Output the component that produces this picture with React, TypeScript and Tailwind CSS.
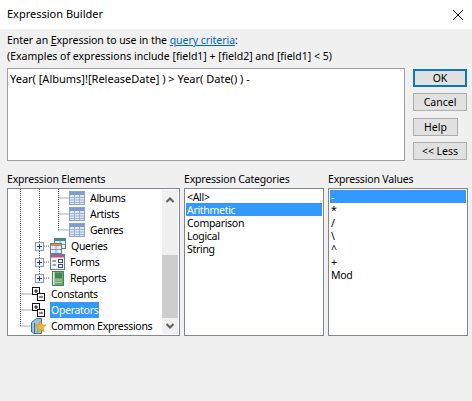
import React from "react";

function TableIcon() {
  return (
    <svg width="16" height="14" viewBox="0 0 16 14" className="shrink-0">
      <rect x="0.5" y="0.5" width="15" height="13" fill="#dfe7f5" stroke="#8fa3c4" />
      <rect x="1" y="1" width="14" height="3" fill="#7f9ccb" />
      <path d="M1 6.5H15M1 9H15M1 11.5H15M5.5 4V13M10.5 4V13" stroke="#9db3d6" fill="none" />
    </svg>
  );
}

function PlusBox() {
  return (
    <svg width="9" height="9" viewBox="0 0 9 9" className="shrink-0">
      <rect x="0.5" y="0.5" width="8" height="8" fill="#f1f1f1" stroke="#8f9aa8" />
      <path d="M2 4.5H7M4.5 2V7" stroke="#2c3e63" fill="none" />
    </svg>
  );
}

function QueriesIcon() {
  return (
    <svg width="16" height="16" viewBox="0 0 16 16" className="shrink-0">
      <rect x="4.5" y="0.5" width="11" height="10" fill="#e6f0ee" stroke="#4d8a83" />
      <rect x="5" y="1" width="10" height="2" fill="#3f8f88" />
      <path d="M10 3V10M5 6.5H15" stroke="#7eaaa5" fill="none" />
      <rect x="0.5" y="5.5" width="11" height="10" fill="#e3ebf6" stroke="#5f7fb0" />
      <rect x="1" y="6" width="10" height="2" fill="#e08a3c" />
      <path d="M6 8V15M1 11.5H11" stroke="#7f9ccb" fill="none" />
    </svg>
  );
}

function FormsIcon() {
  return (
    <svg width="15" height="16" viewBox="0 0 15 16" className="shrink-0">
      <rect x="0.5" y="0.5" width="14" height="15" fill="#f4f6fa" stroke="#6e7f9c" />
      <rect x="1" y="1" width="13" height="2.5" fill="#c2577d" />
      <path d="M2.5 7H6M2.5 11H6" stroke="#35507f" fill="none" />
      <rect x="8.5" y="5.5" width="4" height="3" fill="#fff" stroke="#35507f" />
      <rect x="8.5" y="10.5" width="4" height="3" fill="#fff" stroke="#35507f" />
    </svg>
  );
}

function ReportsIcon() {
  return (
    <svg width="15" height="15" viewBox="0 0 15 15" className="shrink-0">
      <rect x="2.5" y="0.5" width="11" height="14" fill="#6aa870" stroke="#4f7f56" />
      <rect x="3" y="1" width="1.5" height="13" fill="#dfe9df" />
      <rect x="5" y="2" width="7" height="5" fill="#3f8a4c" />
      <path d="M5 9H12M5 11.5H12" stroke="#a9d0ad" fill="none" />
    </svg>
  );
}

function DoubleBox() {
  return (
    <svg width="14" height="16" viewBox="0 0 14 16" className="shrink-0">
      <rect x="0.5" y="1.5" width="7" height="7" fill="#fff" stroke="#111" />
      <path d="M2 5H6M4 3V7" stroke="#111" fill="none" />
      <rect x="5.5" y="7.5" width="7" height="7" fill="#fff" stroke="#111" />
      <path d="M7 11H11" stroke="#111" fill="none" />
    </svg>
  );
}

function CommonIcon() {
  return (
    <svg width="15" height="16" viewBox="0 0 15 16" className="shrink-0">
      <path d="M0.5 4.5L5.5 0.5H10.5V15.5H3L0.5 14Z" fill="#9cc3dd" stroke="#3d7299" />
      <path d="M3.5 5V15" stroke="#3d7299" fill="none" />
      <path d="M9.5 3L11.2 7H15L12 9.6L13 14L9.5 11.5L6 14L7 9.6L4 7H7.8Z" fill="#f4b81f" stroke="#c98a10" strokeWidth="0.6" />
    </svg>
  );
}

function TreeRow({ indent, icon, label, selected, plus }: { indent: string; icon: React.ReactNode; label: string; selected?: boolean; plus?: boolean }) {
  return (
    <div className={`flex h-4 items-center whitespace-nowrap tracking-[-0.3px] ${indent}`}>
      {plus && <span className="mr-[6px] flex"><PlusBox /></span>}
      {icon}
      <span className={`ml-[4px] px-px leading-4 ${selected ? "bg-[#3399ff] text-white" : ""}`}>{label}</span>
    </div>
  );
}

function ListBox({ items, selected, width, title }: { items: string[]; selected: string; width: string; title: string }) {
  return (
    <div className={`flex flex-col ${width}`}>
      <div className="mb-px h-4 leading-4 tracking-[-0.18px]">{title}</div>
      <div className="h-[148px] border border-[#828790] bg-white p-px tracking-[-0.3px]">
        {items.map((t) => (
          <div key={t} className={`h-[13px] pl-px leading-[15px] ${t === selected ? "bg-[#3399ff] text-white" : ""}`}>{t}</div>
        ))}
      </div>
    </div>
  );
}

function Btn({ label, cls }: { label: React.ReactNode; cls: string }) {
  return <button className={`flex items-center justify-center bg-[#e1e1e1] leading-none ${cls}`}>{label}</button>;
}

export default function App() {
  return (
    <div className="flex h-[401px] w-[472px] flex-col overflow-hidden bg-[#f0f0f0] font-['Noto_Sans',sans-serif] text-[10.5px] text-black">
      <div className="flex h-[29px] items-center justify-between bg-white pl-[7px] pr-[7px]">
        <span className="text-[11px]">Expression Builder</span>
        <svg width="10" height="10" viewBox="0 0 10 10" className="mr-[2px]">
          <path d="M0 0L10 10M10 0L0 10" stroke="#111" fill="none" />
        </svg>
      </div>
      <div className="flex flex-col pl-[7px] pr-[4px] pt-[3px]">
        <div className="h-[17px] whitespace-nowrap leading-[17px] tracking-[-0.05px]">
          Enter an <span className="underline">E</span>xpression to use in the{" "}
          <span className="text-[#0066cc] underline">query criteria</span>:
        </div>
        <div className="h-4 whitespace-nowrap leading-[15px]">(Examples of expressions include [field1] + [field2] and [field1] &lt; 5)</div>
        <div className="mt-[3px] flex">
          <div className="h-[93px] w-[398px] border border-[#a0a0a0] bg-white px-[2px] pt-[2px] text-[11px] leading-4">
            Year( [Albums]![ReleaseDate] ) &gt; Year( Date() ) -
          </div>
          <div className="ml-2 flex flex-col pt-px">
            <Btn label="OK" cls="h-[18px] w-[54px] border-2 border-[#0078d7]" />
            <Btn label="Cancel" cls="mt-[6px] h-[18px] w-[54px] border border-[#adadad]" />
            <Btn label="Help" cls="mt-[7px] h-[18px] w-[45px] border border-[#adadad]" />
            <Btn label="<< Less" cls="mt-[6px] h-[18px] w-[54px] border border-[#adadad]" />
          </div>
        </div>
        <div className="mt-[10px] flex">
          <div className="flex w-[173px] flex-col">
            <div className="mb-px h-4 leading-4 tracking-[-0.18px]">Expression Elements</div>
            <div className="relative flex h-[148px] border border-[#828790] bg-white">
              <svg width="160" height="146" className="absolute left-0 top-0" viewBox="0 0 160 146">
                <path
                  d="M12.5 0V137M12.5 105H24M12.5 121H24M12.5 137H24M31.5 0V89M50.5 0V41M50.5 9H61M50.5 25H61M50.5 41H61M36 57H42M36 73H42M36 89H42"
                  stroke="#555"
                  strokeDasharray="1 1"
                  fill="none"
                />
              </svg>
              <div className="relative flex-1 pt-px">
                <TreeRow indent="pl-[61px]" icon={<TableIcon />} label="Albums" />
                <TreeRow indent="pl-[61px]" icon={<TableIcon />} label="Artists" />
                <TreeRow indent="pl-[61px]" icon={<TableIcon />} label="Genres" />
                <TreeRow indent="pl-[27px]" plus icon={<QueriesIcon />} label="Queries" />
                <TreeRow indent="pl-[27px]" plus icon={<FormsIcon />} label="Forms" />
                <TreeRow indent="pl-[27px]" plus icon={<ReportsIcon />} label="Reports" />
                <TreeRow indent="pl-[24px]" icon={<DoubleBox />} label="Constants" />
                <TreeRow indent="pl-[24px]" icon={<DoubleBox />} label="Operators" selected />
                <TreeRow indent="pl-[23px]" icon={<CommonIcon />} label="Common Expressions" />
              </div>
              <div className="my-px mr-px flex w-[16px] flex-col bg-[#f0f0f0]">
                <div className="flex h-[16px] items-center justify-center pt-[3px]">
                  <svg width="8" height="6" viewBox="0 0 8 6"><path d="M0.5 5L4 1.5L7.5 5" stroke="#606060" strokeWidth="2" fill="none" /></svg>
                </div>
                <div className="mt-[49px] h-[63px] bg-[#cdcdcd]" />
                <div className="mt-auto flex h-[16px] items-center justify-center">
                  <svg width="8" height="6" viewBox="0 0 8 6"><path d="M0.5 1L4 4.5L7.5 1" stroke="#606060" strokeWidth="2" fill="none" /></svg>
                </div>
              </div>
            </div>
          </div>
          <ListBox width="ml-1 w-[140px]" title="Expression Categories" selected="Arithmetic" items={["<All>", "Arithmetic", "Comparison", "Logical", "String"]} />
          <ListBox width="ml-1 w-[140px]" title="Expression Values" selected="-" items={["-", "*", "/", "\\", "^", "+", "Mod"]} />
        </div>
      </div>
    </div>
  );
}
